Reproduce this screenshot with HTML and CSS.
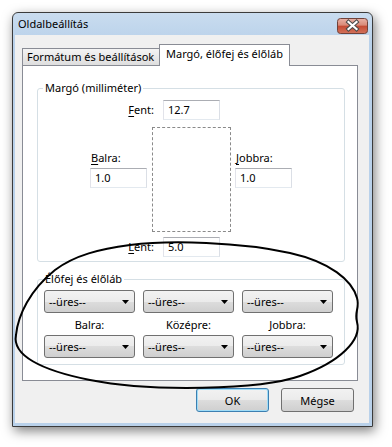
FILE: index.html
```html
<!DOCTYPE html>
<html lang="hu">
<head>
<meta charset="utf-8">
<title>Oldalbeállítás</title>
<link rel="stylesheet" href="styles.css">
</head>
<body>
<div class="stage">
  <div class="window">
    <div class="titlebar">
      <span class="title">Oldalbeállítás</span>
      <span class="close">
        <svg width="31" height="16" viewBox="0 0 31 16">
          <defs>
            <linearGradient id="cg" x1="0" y1="0" x2="0" y2="1">
              <stop offset="0" stop-color="#e9b2a6"/>
              <stop offset="0.45" stop-color="#d98a78"/>
              <stop offset="0.5" stop-color="#c44a33"/>
              <stop offset="1" stop-color="#d3735c"/>
            </linearGradient>
          </defs>
          <rect x="0.5" y="0.5" width="30" height="15" rx="3" fill="url(#cg)" stroke="#70423a"/>
          <path d="M11.5 4 L19.5 11 M19.5 4 L11.5 11" stroke="#4a4a4a" stroke-width="4.2" stroke-linecap="square"/>
          <path d="M11.5 4 L19.5 11 M19.5 4 L11.5 11" stroke="#ffffff" stroke-width="2.2" stroke-linecap="square"/>
        </svg>
      </span>
    </div>
    <div class="content">
      <div class="tabs">
        <div class="tab inactive">Formátum és beállítások</div>
        <div class="tab active">Margó, élőfej és élőláb</div>
      </div>
      <div class="panel">
        <fieldset class="group margins">
          <legend>Margó (milliméter)</legend>
          <div class="row-tb">
            <label class="lbl-tb"><u>F</u>ent:</label>
            <div class="input">12.7</div>
          </div>
          <div class="middle">
            <div class="side">
              <label class="lbl"><u>B</u>alra:</label>
              <div class="input">1.0</div>
            </div>
            <div class="page"></div>
            <div class="side">
              <label class="lbl"><u>J</u>obbra:</label>
              <div class="input">1.0</div>
            </div>
          </div>
          <div class="row-tb bottom">
            <label class="lbl-tb"><u>L</u>ent:</label>
            <div class="input">5.0</div>
          </div>
        </fieldset>
        <fieldset class="group hf">
          <legend>Élőfej és élőláb</legend>
          <div class="combos first">
            <div class="combo"><span>--üres--</span><svg class="arrow" width="7" height="4" viewBox="0 0 7 4"><path d="M0 0H7L3.5 4Z"/></svg></div>
            <div class="combo"><span>--üres--</span><svg class="arrow" width="7" height="4" viewBox="0 0 7 4"><path d="M0 0H7L3.5 4Z"/></svg></div>
            <div class="combo"><span>--üres--</span><svg class="arrow" width="7" height="4" viewBox="0 0 7 4"><path d="M0 0H7L3.5 4Z"/></svg></div>
          </div>
          <div class="col-labels">
            <span>Balra:</span>
            <span>Középre:</span>
            <span>Jobbra:</span>
          </div>
          <div class="combos">
            <div class="combo"><span>--üres--</span><svg class="arrow" width="7" height="4" viewBox="0 0 7 4"><path d="M0 0H7L3.5 4Z"/></svg></div>
            <div class="combo"><span>--üres--</span><svg class="arrow" width="7" height="4" viewBox="0 0 7 4"><path d="M0 0H7L3.5 4Z"/></svg></div>
            <div class="combo"><span>--üres--</span><svg class="arrow" width="7" height="4" viewBox="0 0 7 4"><path d="M0 0H7L3.5 4Z"/></svg></div>
          </div>
        </fieldset>
      </div>
      <div class="buttons">
        <button class="btn default">OK</button>
        <button class="btn">Mégse</button>
      </div>
    </div>
  </div>
  <svg class="annotation" width="392" height="447" viewBox="0 0 392 447">
    <path d="M130 245 C170 240, 240 242, 290 253 C330 262, 352 280, 357 298 C360 308, 354 312, 357 322 C362 340, 340 362, 300 376 C260 390, 150 392, 90 380 C40 370, 12 355, 16 335 C18 315, 30 290, 55 270 C75 255, 100 249, 130 245 Z" fill="none" stroke="#000" stroke-width="2"/>
  </svg>
</div>
</body>
</html>
```
FILE: styles.css
```css
* { box-sizing: border-box; }

body {
  margin: 0;
  background: #ffffff;
  font-family: "Noto Sans", "Open Sans", sans-serif;
  font-size: 11px;
  color: #000;
}

.stage {
  position: relative;
  width: 392px;
  height: 447px;
  padding: 12px 0 0 12px;
}

.window {
  width: 361px;
  height: 415px;
  border: 1px solid #3b3b3b;
  border-radius: 6px 6px 0 0;
  background: linear-gradient(#c9dcef, #b9d1ea 30px);
  padding: 0 3px 3px 2px;
  display: flex;
  flex-direction: column;
  box-shadow: 2px 4px 12px rgba(0, 0, 0, 0.5);
}

.titlebar {
  height: 22px;
  display: flex;
  align-items: center;
  justify-content: space-between;
  padding-left: 3px;
}

.title {
  line-height: 16px;
}

.close {
  display: block;
  width: 31px;
  height: 16px;
  margin-right: 1px;
  margin-top: 3px;
}
.close svg { display: block; }

.content {
  flex: 1;
  background: #f0f0f0;
  padding: 9px 11px 0 7px;
  display: flex;
  flex-direction: column;
}

.tabs {
  display: flex;
  align-items: flex-end;
  height: 21px;
}

.tab {
  white-space: nowrap;
}

.tab.inactive {
  width: 137px;
  height: 17px;
  border: 1px solid #898c95;
  border-right: none;
  border-bottom: none;
  padding-left: 4px;
  line-height: 15px;
  background: linear-gradient(#f4f4f4, #e9e9e9 50%, #dedede);
}

.tab.active {
  width: 131px;
  height: 22px;
  border: 1px solid #898c95;
  border-bottom: none;
  background: #fff;
  margin-bottom: -1px;
  position: relative;
  z-index: 1;
  padding-left: 6px;
  padding-top: 1px;
  line-height: 16px;
}

.panel {
  height: 316px;
  border: 1px solid #898c95;
  background: #fff;
  padding: 14px 12px 0 14px;
}

.group {
  margin: 0;
  padding: 0;
  min-width: 0;
  border: 1px solid #d5dfe5;
  border-radius: 3px;
}

.group legend {
  padding: 0 2px;
  margin-left: 5px;
  line-height: 16px;
}

.row-tb {
  display: flex;
  align-items: center;
  margin-top: 4px;
  margin-left: 76px;
}
.row-tb.bottom {
  margin-top: 5px;
  margin-bottom: 4px;
}

.lbl-tb {
  width: 40px;
  text-align: right;
  line-height: 16px;
}

.row-tb .input {
  margin-left: 9px;
}

u {
  text-decoration: underline;
  text-underline-offset: 2px;
  text-decoration-thickness: 1px;
}

.input {
  width: 57px;
  height: 20px;
  border: 1px solid;
  border-color: #abadb3 #dbdfe6 #e3e9ef #e2e3ea;
  background: #fff;
  padding-left: 4px;
  line-height: 18px;
}

.middle {
  display: flex;
  margin-top: 7px;
  margin-left: 52px;
}

.side {
  width: 57px;
  padding-top: 23px;
}

.lbl {
  display: block;
  line-height: 16px;
  padding-left: 1px;
}

.side .input {
  margin-top: 2px;
}

.page {
  width: 79px;
  height: 105px;
  border: 1px dashed #8a8a8a;
  margin: 0 4px 0 5px;
}

.hf {
  margin-top: 9px;
}

.combos {
  display: flex;
  gap: 8px;
  padding-left: 6px;
  margin-top: 2px;
}
.combos.first {
  margin-top: 3px;
}

.combo {
  width: 91px;
  height: 23px;
  border: 1px solid #707070;
  border-radius: 3px;
  background: linear-gradient(#f2f2f2, #ebebeb 50%, #dddddd 50%, #cfcfcf);
  display: flex;
  align-items: center;
  justify-content: space-between;
  padding: 0 5px 0 4px;
  line-height: 16px;
}

.arrow { display: block; }
.arrow path { fill: #000; }

.col-labels {
  display: flex;
  gap: 8px;
  padding-left: 6px;
  margin-top: 4px;
}
.col-labels span {
  width: 91px;
  text-align: center;
  line-height: 16px;
}

.hf .combos:last-child {
  margin-bottom: 6px;
}

.buttons {
  display: flex;
  justify-content: flex-end;
  gap: 12px;
  margin-top: 7px;
  margin-right: 4px;
}

.btn {
  width: 73px;
  height: 24px;
  margin: 0;
  padding: 0;
  font-family: inherit;
  font-size: 11px;
  color: #000;
  border: 1px solid #707070;
  border-radius: 3px;
  background: linear-gradient(#f2f2f2, #ebebeb 50%, #dddddd 50%, #cfcfcf);
}

.btn.default {
  border-color: #3c7fb1;
  box-shadow: inset 0 0 0 1px #9fdcf7;
}

.annotation {
  position: absolute;
  left: 0;
  top: 0;
  pointer-events: none;
}
```
